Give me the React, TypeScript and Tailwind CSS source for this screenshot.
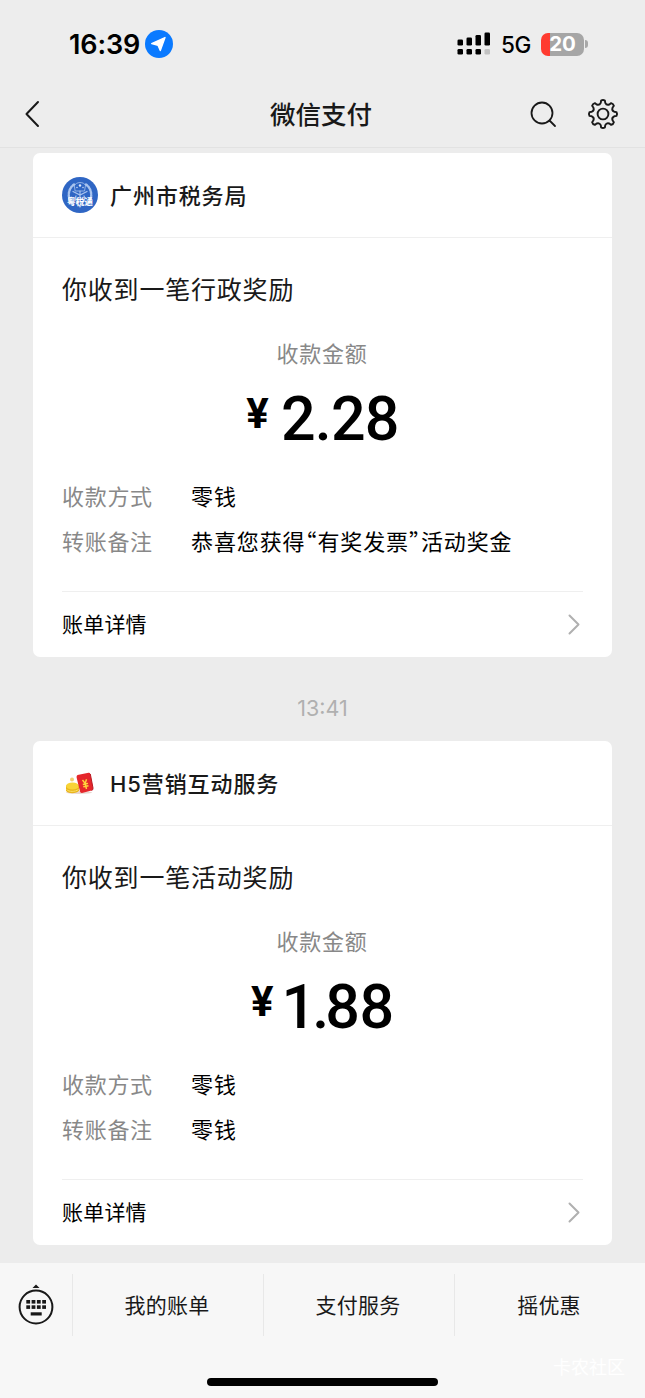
import React from 'react';

interface Bill {
  merchant: string;
  logo: React.ReactNode;
  title: string;
  amount: string;
  rows: { label: string; value: string }[];
}

const TaxLogo = () => (
  <svg className="h-9 w-9" viewBox="0 0 36 36">
    <circle cx="18" cy="18" r="18" fill="#2f66c4" />
    {/* Wreath */}
    <g fill="none" stroke="#a9c4ee" strokeLinecap="round">
      <path d="M12 7.5C5.5 12 5 22 11 27.5" strokeWidth="2.4" strokeDasharray="1.6 1.4" />
      <path d="M24 7.5C30.5 12 31 22 25 27.5" strokeWidth="2.4" strokeDasharray="1.6 1.4" />
      <path d="M12.5 8.5C14 4.5 22 4.5 23.5 8.5L22.5 14H13.5Z" strokeWidth="0.8" />
      <path d="M11 14.5L18 18L25 14.5M18 14V22M14 19C12 21 14 25 18 30C22 25 24 21 22 19" strokeWidth="1.2" />
    </g>
    <g fill="#dce8fb">
      <circle cx="18" cy="8.5" r="1.2" />
      <circle cx="15" cy="10.5" r="0.7" />
      <circle cx="21" cy="10.5" r="0.7" />
    </g>
    <text
      x="18"
      y="28"
      textAnchor="middle"
      fontSize="8.6"
      fontWeight="700"
      fill="#fff"
      fontFamily="Noto Sans CJK SC, sans-serif"
    >
      粤税通
    </text>
  </svg>
);

const RedPacketLogo = () => (
  <svg className="h-9 w-9" viewBox="0 0 36 36">
    <ellipse cx="17" cy="27.5" rx="13" ry="1.5" fill="#e8d6cf" />
    <path d="M4 20.5V25.5C5 29 15 29 17 25.5V20.5Z" fill="#eab51c" />
    <ellipse cx="10.5" cy="21" rx="6.5" ry="3.5" fill="#f8d437" />
    <path d="M4.5 24.5C7 27 13 27 16.5 24.5" fill="none" stroke="#fae169" />
    <circle cx="10" cy="14.5" r="2" fill="#f0cf72" />
    <path d="M15.5 10L26.5 7.8Q28 7.5 28.3 9L31 23Q31.3 25 29.5 25.5L20 28Q18.5 28 18 26.5L14.6 12.5Q14.3 10.5 15.5 10Z" fill="#e5262b" />
    <path d="M28.3 9L31 23Q31.3 25 29.5 25.5" fill="none" stroke="#b91822" />
    <path d="M20.5 15L23.2 18.5L24.5 14.2M20.8 19.5L26 18.4M21.3 21.8L26.5 20.7M23.2 18.5L24.5 24" fill="none" stroke="#ffd43b" strokeWidth="1.4" />
  </svg>
);

const bills: Bill[] = [
  {
    merchant: '广州市税务局',
    logo: <TaxLogo />,
    title: '你收到一笔行政奖励',
    amount: '2.28',
    rows: [
      { label: '收款方式', value: '零钱' },
      { label: '转账备注', value: '恭喜您获得“有奖发票”活动奖金' },
    ],
  },
  {
    merchant: 'H5营销互动服务',
    logo: <RedPacketLogo />,
    title: '你收到一笔活动奖励',
    amount: '1.88',
    rows: [
      { label: '收款方式', value: '零钱' },
      { label: '转账备注', value: '零钱' },
    ],
  },
];

const menu = ['我的账单', '支付服务', '摇优惠'];

// Eight-tooth gear outline centred on 0,0
const gearPath = () => {
  const pt = (deg: number, r: number) => {
    const a = (deg * Math.PI) / 180;
    return `${(Math.cos(a) * r).toFixed(2)} ${(Math.sin(a) * r).toFixed(2)}`;
  };
  let d = '';
  for (let k = 0; k < 8; k++) {
    const c = k * 45;
    d += `${k === 0 ? 'M' : 'L'}${pt(c - 8, 13.6)}Q${pt(c, 14.6)} ${pt(c + 8, 13.6)}`;
    d += `L${pt(c + 11.5, 11.4)}Q${pt(c + 22.5, 9.2)} ${pt(c + 33.5, 11.4)}`;
  }
  return d + 'Z';
};

const StatusBar = () => (
  <div className="flex h-[88px] items-center justify-between pl-[69px] pr-[57px]">
    <div className="flex items-center gap-[5px]">
      <span className="w-[71px] text-[27px] leading-none font-semibold tracking-[-0.1px] text-black">16:39</span>
      <svg className="h-7 w-7" viewBox="0 0 28 28">
        <circle cx="14" cy="14" r="14" fill="#0a7aff" />
        <path d="M20 7.6L15.3 20.5L13 15.2L6.7 13.6Z" fill="#fff" stroke="#fff" strokeWidth="1.4" strokeLinejoin="round" />
      </svg>
    </div>
    <div className="flex items-center">
      <svg className="mr-[10px] h-6 w-[34px]" viewBox="0 0 34 24">
        <rect x="0.5" y="7.5" width="5.5" height="6" rx="1.3" />
        <rect x="9.5" y="5.5" width="5.5" height="8" rx="1.3" />
        <rect x="18.5" y="3" width="5.5" height="10.5" rx="1.3" />
        <rect x="27.5" y="0.5" width="5.5" height="13" rx="1.3" />
        <rect x="0.5" y="17" width="5.5" height="5.5" rx="1.3" />
        <rect x="9.5" y="17" width="5.5" height="5.5" rx="1.3" />
        <rect x="18.5" y="17" width="5.5" height="5.5" rx="1.3" />
        <rect x="27.5" y="17" width="5.5" height="5.5" rx="1.3" fill="#c2c2c2" />
      </svg>
      <span className="w-[40px] pt-0.5 text-[22.5px] leading-none font-medium tracking-[-0.5px] text-black">5G</span>
      <div className="flex h-[23px] w-[43px] items-center justify-center rounded-[7px] bg-[linear-gradient(90deg,#ff3b30_9px,#a6a6a6_9px)]">
        <span className="text-[20.5px] leading-none font-bold text-white">20</span>
      </div>
      <div className="ml-px h-2 w-[3px] rounded-r-full bg-[#a8a8a8]" />
    </div>
  </div>
);

const NavBar = () => (
  <div className="flex h-[60px] items-center border-b border-[#e2e2e2] px-6 pb-[7px]">
    <div className="flex w-[120px]">
      <svg className="h-7 w-4" viewBox="0 0 16 28" fill="none" stroke="#191919" strokeWidth="2">
        <path d="M14 2L2.5 14L14 26" strokeLinecap="round" strokeLinejoin="round" />
      </svg>
    </div>
    <h1 className="flex-1 pt-px pr-[3px] text-center text-[25.5px] leading-none font-medium text-[#191919]">微信支付</h1>
    <div className="flex w-[120px] items-center justify-end gap-[26px]">
      <svg className="h-8 w-8" viewBox="0 0 32 32" fill="none" stroke="#191919" strokeWidth="1.8">
        <circle cx="15" cy="15" r="10.5" />
        <path d="M22.5 22.5L28 28" strokeLinecap="round" />
      </svg>
      <svg className="h-9 w-9" viewBox="-18 -18 36 36" fill="none" stroke="#191919" strokeWidth="1.9" strokeLinejoin="round">
        <path d={gearPath()} />
        <circle r="5.4" />
      </svg>
    </div>
  </div>
);

// A leading "1" is set tighter than the other figures
const Amount: React.FC<{ value: string }> = ({ value }) => (
  <div className="mt-[17px] flex h-16 items-start justify-center gap-[13px] font-[Roboto,sans-serif] text-black">
    <span className="mt-[6px] text-[42px] leading-[42px] font-bold">¥</span>
    <span
      className={`text-[61px] leading-[64px] font-medium ${
        value.startsWith('1') ? '-ml-[5px] tracking-[-0.3px] first-letter:tracking-[-4px]' : '-ml-px tracking-[-0.8px]'
      }`}
    >
      {value}
    </span>
  </div>
);

const BillCard: React.FC<{ bill: Bill }> = ({ bill }) => (
  <section className="h-[504px] rounded-[7px] bg-white">
    <div className="flex h-[85px] items-center gap-3 border-b border-[#efefef] px-[29px]">
      {bill.logo}
      <span className="pt-px text-[22px] leading-8 font-medium tracking-[0.9px] text-[#191919]">{bill.merchant}</span>
    </div>
    <div className="px-[29px] pt-8">
      <h2 className="text-[25px] leading-10 tracking-[0.8px] text-[#191919]">{bill.title}</h2>
      <p className="mt-7 pr-px text-center text-[22px] leading-8 tracking-[0.7px] text-[#888]">收款金额</p>
      <Amount value={bill.amount} />
      <dl className="mt-[24px]">
        {bill.rows.map((row) => (
          <div key={row.label} className="flex h-[45px] items-center text-[22px] leading-8 tracking-[0.7px]">
            <dt className="w-[129px] pb-0.5 text-[#888]">{row.label}</dt>
            {/* half-width curly quotes */}
            <dd className="pb-[5px] font-['Noto_Sans_CJK_SC',sans-serif] tracking-[0.9px] whitespace-nowrap text-black [font-feature-settings:'halt']">
              {row.value}
            </dd>
          </div>
        ))}
      </dl>
      <div className="mt-[26px] flex h-[66px] items-center justify-between border-t border-[#efefef] pr-[3px]">
        <span className="text-[21px] tracking-[0.2px] text-black">账单详情</span>
        <svg className="h-6 w-3" viewBox="0 0 12 24" fill="none" stroke="#b0b0b0" strokeWidth="2" strokeLinecap="round" strokeLinejoin="round">
          <path d="M1.5 2.5L10.5 11.5L1.5 20.5" />
        </svg>
      </div>
    </div>
  </section>
);

const KeyboardIcon = () => (
  <svg className="h-[42px] w-9" viewBox="0 0 36 42" fill="#191919">
    <path d="M18 0.5L21.5 4H14.5Z" />
    <circle cx="18" cy="23" r="16.4" fill="none" stroke="#191919" strokeWidth="2" />
    {[8.3, 13.6, 18.9, 24.2].map((x) => (
      <React.Fragment key={x}>
        <rect x={x} y="16" width="3.8" height="3.6" />
        <rect x={x} y="21.3" width="3.8" height="3.6" />
      </React.Fragment>
    ))}
    <rect x="12.7" y="28.3" width="11" height="3.2" />
  </svg>
);

const BottomMenu = () => (
  <footer className="relative flex h-[135px] flex-col items-center bg-[#f7f7f7]">
    <div className="flex h-[84px] w-full items-center">
      <div className="flex w-[72px] justify-center">
        <KeyboardIcon />
      </div>
      {menu.map((item) => (
        <button
          key={item}
          className="h-[62px] flex-1 border-l border-[#e8e8e8] pt-px pr-0.5 text-[21px] tracking-[0.2px] text-[#191919]"
        >
          {item}
        </button>
      ))}
    </div>
    <div className="mt-[31px] h-2 w-[231px] rounded-full bg-black" />
    <span className="absolute right-5 bottom-[18px] text-[18px] leading-6 text-white">卡农社区</span>
  </footer>
);

export default function App() {
  return (
    <div className="flex h-[1398px] w-[645px] flex-col overflow-hidden bg-[#ececec] font-['Inter','Noto_Sans_CJK_SC',sans-serif]" lang="zh-CN">
      <header className="bg-[#ededed]">
        <StatusBar />
        <NavBar />
      </header>
      <main className="flex-1 px-[33px] pt-[5px]">
        <BillCard bill={bills[0]} />
        <div className="flex h-[84px] items-center justify-center pt-[19px] text-[21.5px] leading-none text-[#b0b0b0]">13:41</div>
        <BillCard bill={bills[1]} />
      </main>
      <BottomMenu />
    </div>
  );
}
